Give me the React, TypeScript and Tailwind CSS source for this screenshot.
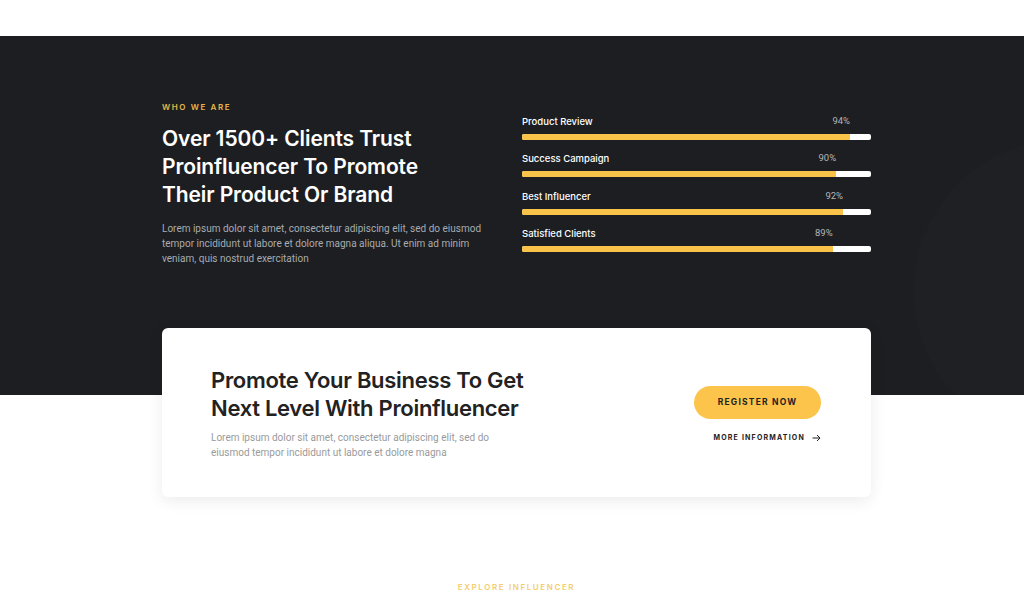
import React from "react";

const skills = [
  { label: "Product Review", pct: 94 },
  { label: "Success Campaign", pct: 90 },
  { label: "Best Influencer", pct: 92 },
  { label: "Satisfied Clients", pct: 89 },
];

export default function App() {
  return (
    <div className="w-full h-[592px] bg-white overflow-hidden pl-[9px] font-[Inter,'Liberation_Sans',sans-serif]">
      <div className="h-[36px] bg-white" />
      <section className="-ml-[9px] pl-[9px] h-[359px] bg-[#1c1e21] bg-[radial-gradient(circle_at_1065px_255px,#1e2023_0,#1e2023_150px,#1c1e21_152px)] pt-[65px]">
        <div className="mx-auto w-[709px] flex items-center justify-between">
          <div className="w-[330px]">
            <div className="text-[8px] leading-[12px] font-semibold tracking-[1.6px] text-[#e9b949]">
              WHO WE ARE
            </div>
            <h2 className="mt-[12px] text-[21px] leading-[28px] font-semibold text-white tracking-[-0.1px]">
              Over 1500+ Clients Trust
              <br />
              Proinfluencer To Promote
              <br />
              Their Product Or Brand
            </h2>
            <p className="mt-[12px] text-[10px] leading-[15px] text-[#a9acb0] font-[Roboto,sans-serif]">
              Lorem ipsum dolor sit amet, consectetur adipiscing elit, sed do eiusmod tempor incididunt ut labore et dolore magna aliqua. Ut enim ad minim veniam, quis nostrud exercitation
            </p>
          </div>
          <div className="w-[349px] flex flex-col gap-[12.5px]">
            {skills.map((s) => (
              <div key={s.label}>
                <div className="relative h-[14px] text-[9.5px] leading-[14px]">
                  <div className="font-medium text-white">{s.label}</div>
                  <div
                    className="absolute top-[-1px] -translate-x-full text-[#b5b7ba] font-[Roboto,sans-serif]"
                    style={{ left: `${s.pct}%` }}
                  >
                    {s.pct}%
                  </div>
                </div>
                <div className="mt-[5px] h-[6px] rounded-[2px] bg-white overflow-hidden">
                  <div className="h-full bg-[#f9c34a]" style={{ width: `${s.pct}%` }} />
                </div>
              </div>
            ))}
          </div>
        </div>
      </section>
      <div className="relative mx-auto -mt-[67px] w-[709px] h-[169px] rounded-[6px] bg-white shadow-[0_4px_16px_rgba(0,0,0,0.08)] flex items-center justify-between pl-[49px] pr-[50px]">
        <div>
          <h3 className="text-[22px] leading-[28px] font-semibold text-[#222222] tracking-[-0.3px]">
            Promote Your Business To Get
            <br />
            Next Level With Proinfluencer
          </h3>
          <p className="mt-[8px] w-[290px] text-[10px] leading-[15px] text-[#9a9a9a] font-[Roboto,sans-serif]">
            Lorem ipsum dolor sit amet, consectetur adipiscing elit, sed do eiusmod tempor incididunt ut labore et dolore magna
          </p>
        </div>
        <div className="flex flex-col items-end pt-[4px]">
          <button className="w-[127px] h-[33px] rounded-full bg-[#fcc44b] text-[8.5px] font-bold tracking-[1.2px] text-[#222]">
            REGISTER NOW
          </button>
          <div className="mt-[14px] flex items-center gap-[7px] text-[7px] leading-[10px] font-bold tracking-[1.2px] text-[#222]">
            MORE INFORMATION
            <svg width="9" height="8" viewBox="0 0 9 8" fill="none" stroke="#222" strokeWidth="1">
              <path d="M0.5 4H8M5 1l3 3-3 3" />
            </svg>
          </div>
        </div>
      </div>
      <div className="mt-[84px] text-center text-[8px] leading-[12px] font-semibold tracking-[1.6px] text-[#f5cd6e]">
        EXPLORE INFLUENCER
      </div>
    </div>
  );
}
